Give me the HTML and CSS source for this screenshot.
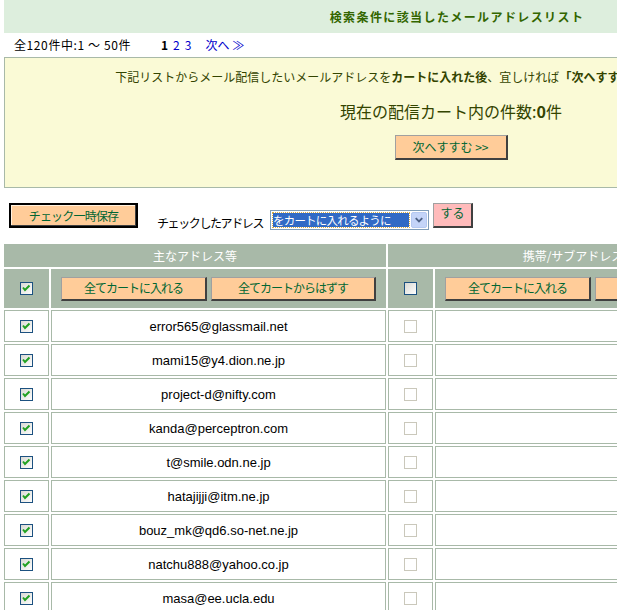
FILE: index.html
```html
<!DOCTYPE html>
<html lang="ja">
<head>
<meta charset="utf-8">
<title>検索条件に該当したメールアドレスリスト</title>
<link rel="stylesheet" href="styles.css">
</head>
<body>
<svg class="defs" width="0" height="0" aria-hidden="true">
  <defs>
    <linearGradient id="cbfill" x1="0" y1="0" x2="1" y2="1">
      <stop offset="0" stop-color="#d8d8d2"/>
      <stop offset="1" stop-color="#ffffff"/>
    </linearGradient>
  </defs>
</svg>
<div class="page">
  <div class="title-bar"><h1>検索条件に該当したメールアドレスリスト</h1></div>

  <div class="pager">
    <span class="count">全120件中:1 ～ 50件</span>
    <span class="pages"><b>1</b><a href="#">2</a><a href="#">3</a></span>
    <a class="next" href="#">次へ ≫</a>
  </div>

  <div class="notice">
    <p class="lead">下記リストからメール配信したいメールアドレスを<b>カートに入れた後</b>、宜しければ<b>「次へすすむ」</b>ボタンを押してください。</p>
    <p class="cart">現在の配信カート内の件数:<b>0</b>件</p>
    <button class="btn btn-next" type="button">次へすすむ &gt;&gt;</button>
  </div>

  <div class="controls">
    <button class="btn btn-save" type="button">チェック一時保存</button>
    <span class="label">チェックしたアドレス</span>
    <div class="select">
      <span class="sel-text">をカートに入れるように</span>
      <span class="sel-arrow"><svg width="15" height="14" viewBox="0 0 15 14"><path d="M4 5l3.5 3.5L11 5" fill="none" stroke="#4d6185" stroke-width="2"/></svg></span>
    </div>
    <button class="btn btn-do" type="button">する</button>
  </div>

  <table class="list">
    <colgroup><col class="c-chk"><col class="c-addr"><col class="c-chk"><col class="c-addr"></colgroup>
    <tr class="head">
      <th colspan="2">主なアドレス等</th>
      <th colspan="2">携帯/サブアドレス等</th>
    </tr>
    <tr class="bulk">
      <td><svg class="cb" width="13" height="13" viewBox="0 0 13 13"><rect x="0.5" y="0.5" width="12" height="12" fill="url(#cbfill)" stroke="#1c5180"/><path d="M3 5.5l2 2.5 4.5-4.5" fill="none" stroke="#21a121" stroke-width="2"/></svg></td>
      <td><div class="btns"><button class="btn btn-all" type="button">全てカートに入れる</button><button class="btn btn-none" type="button">全てカートからはずす</button></div></td>
      <td><svg class="cb" width="13" height="13" viewBox="0 0 13 13"><rect x="0.5" y="0.5" width="12" height="12" fill="url(#cbfill)" stroke="#1c5180"/></svg></td>
      <td><div class="btns"><button class="btn btn-all" type="button">全てカートに入れる</button><button class="btn btn-none" type="button">全てカートからはずす</button></div></td>
    </tr>
    <tr class="row"><td><svg class="cb" width="13" height="13" viewBox="0 0 13 13"><rect x="0.5" y="0.5" width="12" height="12" fill="url(#cbfill)" stroke="#1c5180"/><path d="M3 5.5l2 2.5 4.5-4.5" fill="none" stroke="#21a121" stroke-width="2"/></svg></td><td class="mail">error565@glassmail.net</td><td><svg class="cb" width="13" height="13" viewBox="0 0 13 13"><rect x="0.5" y="0.5" width="12" height="12" fill="#fff" stroke="#cac8bb"/></svg></td><td></td></tr>
    <tr class="row"><td><svg class="cb" width="13" height="13" viewBox="0 0 13 13"><rect x="0.5" y="0.5" width="12" height="12" fill="url(#cbfill)" stroke="#1c5180"/><path d="M3 5.5l2 2.5 4.5-4.5" fill="none" stroke="#21a121" stroke-width="2"/></svg></td><td class="mail">mami15@y4.dion.ne.jp</td><td><svg class="cb" width="13" height="13" viewBox="0 0 13 13"><rect x="0.5" y="0.5" width="12" height="12" fill="#fff" stroke="#cac8bb"/></svg></td><td></td></tr>
    <tr class="row"><td><svg class="cb" width="13" height="13" viewBox="0 0 13 13"><rect x="0.5" y="0.5" width="12" height="12" fill="url(#cbfill)" stroke="#1c5180"/><path d="M3 5.5l2 2.5 4.5-4.5" fill="none" stroke="#21a121" stroke-width="2"/></svg></td><td class="mail">project-d@nifty.com</td><td><svg class="cb" width="13" height="13" viewBox="0 0 13 13"><rect x="0.5" y="0.5" width="12" height="12" fill="#fff" stroke="#cac8bb"/></svg></td><td></td></tr>
    <tr class="row"><td><svg class="cb" width="13" height="13" viewBox="0 0 13 13"><rect x="0.5" y="0.5" width="12" height="12" fill="url(#cbfill)" stroke="#1c5180"/><path d="M3 5.5l2 2.5 4.5-4.5" fill="none" stroke="#21a121" stroke-width="2"/></svg></td><td class="mail">kanda@perceptron.com</td><td><svg class="cb" width="13" height="13" viewBox="0 0 13 13"><rect x="0.5" y="0.5" width="12" height="12" fill="#fff" stroke="#cac8bb"/></svg></td><td></td></tr>
    <tr class="row"><td><svg class="cb" width="13" height="13" viewBox="0 0 13 13"><rect x="0.5" y="0.5" width="12" height="12" fill="url(#cbfill)" stroke="#1c5180"/><path d="M3 5.5l2 2.5 4.5-4.5" fill="none" stroke="#21a121" stroke-width="2"/></svg></td><td class="mail">t@smile.odn.ne.jp</td><td><svg class="cb" width="13" height="13" viewBox="0 0 13 13"><rect x="0.5" y="0.5" width="12" height="12" fill="#fff" stroke="#cac8bb"/></svg></td><td></td></tr>
    <tr class="row"><td><svg class="cb" width="13" height="13" viewBox="0 0 13 13"><rect x="0.5" y="0.5" width="12" height="12" fill="url(#cbfill)" stroke="#1c5180"/><path d="M3 5.5l2 2.5 4.5-4.5" fill="none" stroke="#21a121" stroke-width="2"/></svg></td><td class="mail">hatajijji@itm.ne.jp</td><td><svg class="cb" width="13" height="13" viewBox="0 0 13 13"><rect x="0.5" y="0.5" width="12" height="12" fill="#fff" stroke="#cac8bb"/></svg></td><td></td></tr>
    <tr class="row"><td><svg class="cb" width="13" height="13" viewBox="0 0 13 13"><rect x="0.5" y="0.5" width="12" height="12" fill="url(#cbfill)" stroke="#1c5180"/><path d="M3 5.5l2 2.5 4.5-4.5" fill="none" stroke="#21a121" stroke-width="2"/></svg></td><td class="mail">bouz_mk@qd6.so-net.ne.jp</td><td><svg class="cb" width="13" height="13" viewBox="0 0 13 13"><rect x="0.5" y="0.5" width="12" height="12" fill="#fff" stroke="#cac8bb"/></svg></td><td></td></tr>
    <tr class="row"><td><svg class="cb" width="13" height="13" viewBox="0 0 13 13"><rect x="0.5" y="0.5" width="12" height="12" fill="url(#cbfill)" stroke="#1c5180"/><path d="M3 5.5l2 2.5 4.5-4.5" fill="none" stroke="#21a121" stroke-width="2"/></svg></td><td class="mail">natchu888@yahoo.co.jp</td><td><svg class="cb" width="13" height="13" viewBox="0 0 13 13"><rect x="0.5" y="0.5" width="12" height="12" fill="#fff" stroke="#cac8bb"/></svg></td><td></td></tr>
    <tr class="row"><td><svg class="cb" width="13" height="13" viewBox="0 0 13 13"><rect x="0.5" y="0.5" width="12" height="12" fill="url(#cbfill)" stroke="#1c5180"/><path d="M3 5.5l2 2.5 4.5-4.5" fill="none" stroke="#21a121" stroke-width="2"/></svg></td><td class="mail">masa@ee.ucla.edu</td><td><svg class="cb" width="13" height="13" viewBox="0 0 13 13"><rect x="0.5" y="0.5" width="12" height="12" fill="#fff" stroke="#cac8bb"/></svg></td><td></td></tr>
  </table>
</div>
</body>
</html>
```

FILE: styles.css
```css
html, body {
  margin: 0;
  padding: 0;
  overflow: hidden;
  background: #fff;
}
body {
  font-family: "Noto Sans CJK JP", sans-serif;
  font-size: 12px;
  color: #000;
}
.defs { position: absolute; width: 0; height: 0; }

.page {
  width: 894px;
  padding-left: 4px;
}

.title-bar {
  height: 33px;
  background: #ddeedd;
  display: flex;
  align-items: center;
  justify-content: center;
  padding-left: 12px;
  box-sizing: border-box;
}
.title-bar h1 {
  margin: 0;
  font-size: 12px;
  line-height: 16px;
  font-weight: bold;
  letter-spacing: 1.4px;
  color: #336600;
}

.pager {
  height: 24px;
  line-height: 24px;
  padding-left: 10px;
  display: flex;
  align-items: center;
}
.pager .count { width: 147px; letter-spacing: 0.6px; white-space: pre; }
.pager .pages { display: flex; gap: 5px; }
.pager .pages b { font-weight: bold; }
.pager a { color: #0000cc; text-decoration: none; }
.pager .next { margin-left: 14px; }

.notice {
  border: 1px solid #a8b9a8;
  background: #fafad6;
  text-align: center;
  padding: 11px 0 27px;
  color: #334400;
}
.notice p { margin: 0; }
.notice .lead {
  font-size: 12px;
  line-height: 16px;
  white-space: nowrap;
}
.notice .cart {
  margin-top: 15px;
  font-size: 16px;
  line-height: 22px;
}
.notice .cart b { font-weight: bold; }

.btn {
  font-family: "Noto Sans CJK JP", sans-serif;
  font-size: 12px;
  color: #006633;
  background: #ffcc99;
  border-style: solid;
  border-width: 1px 2px 2px 1px;
  border-color: #a0a0a0 #404040 #404040 #a0a0a0;
  padding: 0;
  margin: 0;
  box-sizing: border-box;
  line-height: 1;
}
.btn-next {
  margin-top: 13px;
  width: 113px;
  height: 25px;
}

.controls {
  display: flex;
  align-items: flex-start;
  height: 54px;
  padding-top: 15px;
  box-sizing: border-box;
}
.btn-save {
  margin-left: 5px;
  width: 129px;
  height: 25px;
  border: 2px solid #000;
  box-shadow: inset -1px -1px 0 #404040, inset 1px 1px 0 #fff2e0;
  letter-spacing: -0.8px;
}
.label {
  margin-left: 19px;
  margin-top: 12px;
  line-height: 16px;
  letter-spacing: -1.4px;
  color: #000;
}
.select {
  margin-left: 7px;
  margin-top: 7px;
  width: 159px;
  height: 20px;
  border: 1px solid #7f9db9;
  box-sizing: border-box;
  background: #fff;
  display: flex;
  align-items: center;
  padding: 0 1px 0 2px;
}
.sel-text {
  flex: 1;
  height: 14px;
  line-height: 14px;
  background: #316ac5;
  color: #fff;
  outline: 1px dotted #e0b040;
  white-space: nowrap;
  margin-right: 2px;
  font-size: 11.5px;
  letter-spacing: -0.8px;
}
.sel-arrow {
  width: 16px;
  height: 16px;
  background: #c4d4f8;
  border: 1px solid #b4c8f0;
  box-sizing: border-box;
  border-radius: 2px;
  display: flex;
  align-items: center;
  justify-content: center;
}
.btn-do {
  margin-left: 4px;
  width: 40px;
  height: 25px;
  background: #ffbbbb;
  padding-bottom: 4px;
}

.list {
  border-collapse: separate;
  border-spacing: 2px;
  margin-left: -2px;
  table-layout: fixed;
  width: 770px;
}
.c-chk { width: 45px; }
.c-addr { width: 335px; }
.list th, .list td {
  border: 1px solid #a8b9a8;
  padding: 0;
  text-align: center;
  vertical-align: middle;
}
.list th {
  background: #a8b9a8;
  color: #fff;
  font-weight: normal;
  height: 21px;
  line-height: 16px;
}
.list .bulk td {
  background: #a8b9a8;
  height: 37px;
}
.list .row td { height: 30px; }
.cb { display: block; margin: 0 auto; }
.btns {
  display: flex;
  justify-content: center;
  gap: 4px;
}
.btn-all, .btn-none {
  height: 24px;
  letter-spacing: -1px;
}
.btn-all { width: 146px; }
.btn-none { width: 165px; }
.mail {
  font-family: "Liberation Sans", Arial, sans-serif;
  font-size: 13px;
  color: #000;
}
```
